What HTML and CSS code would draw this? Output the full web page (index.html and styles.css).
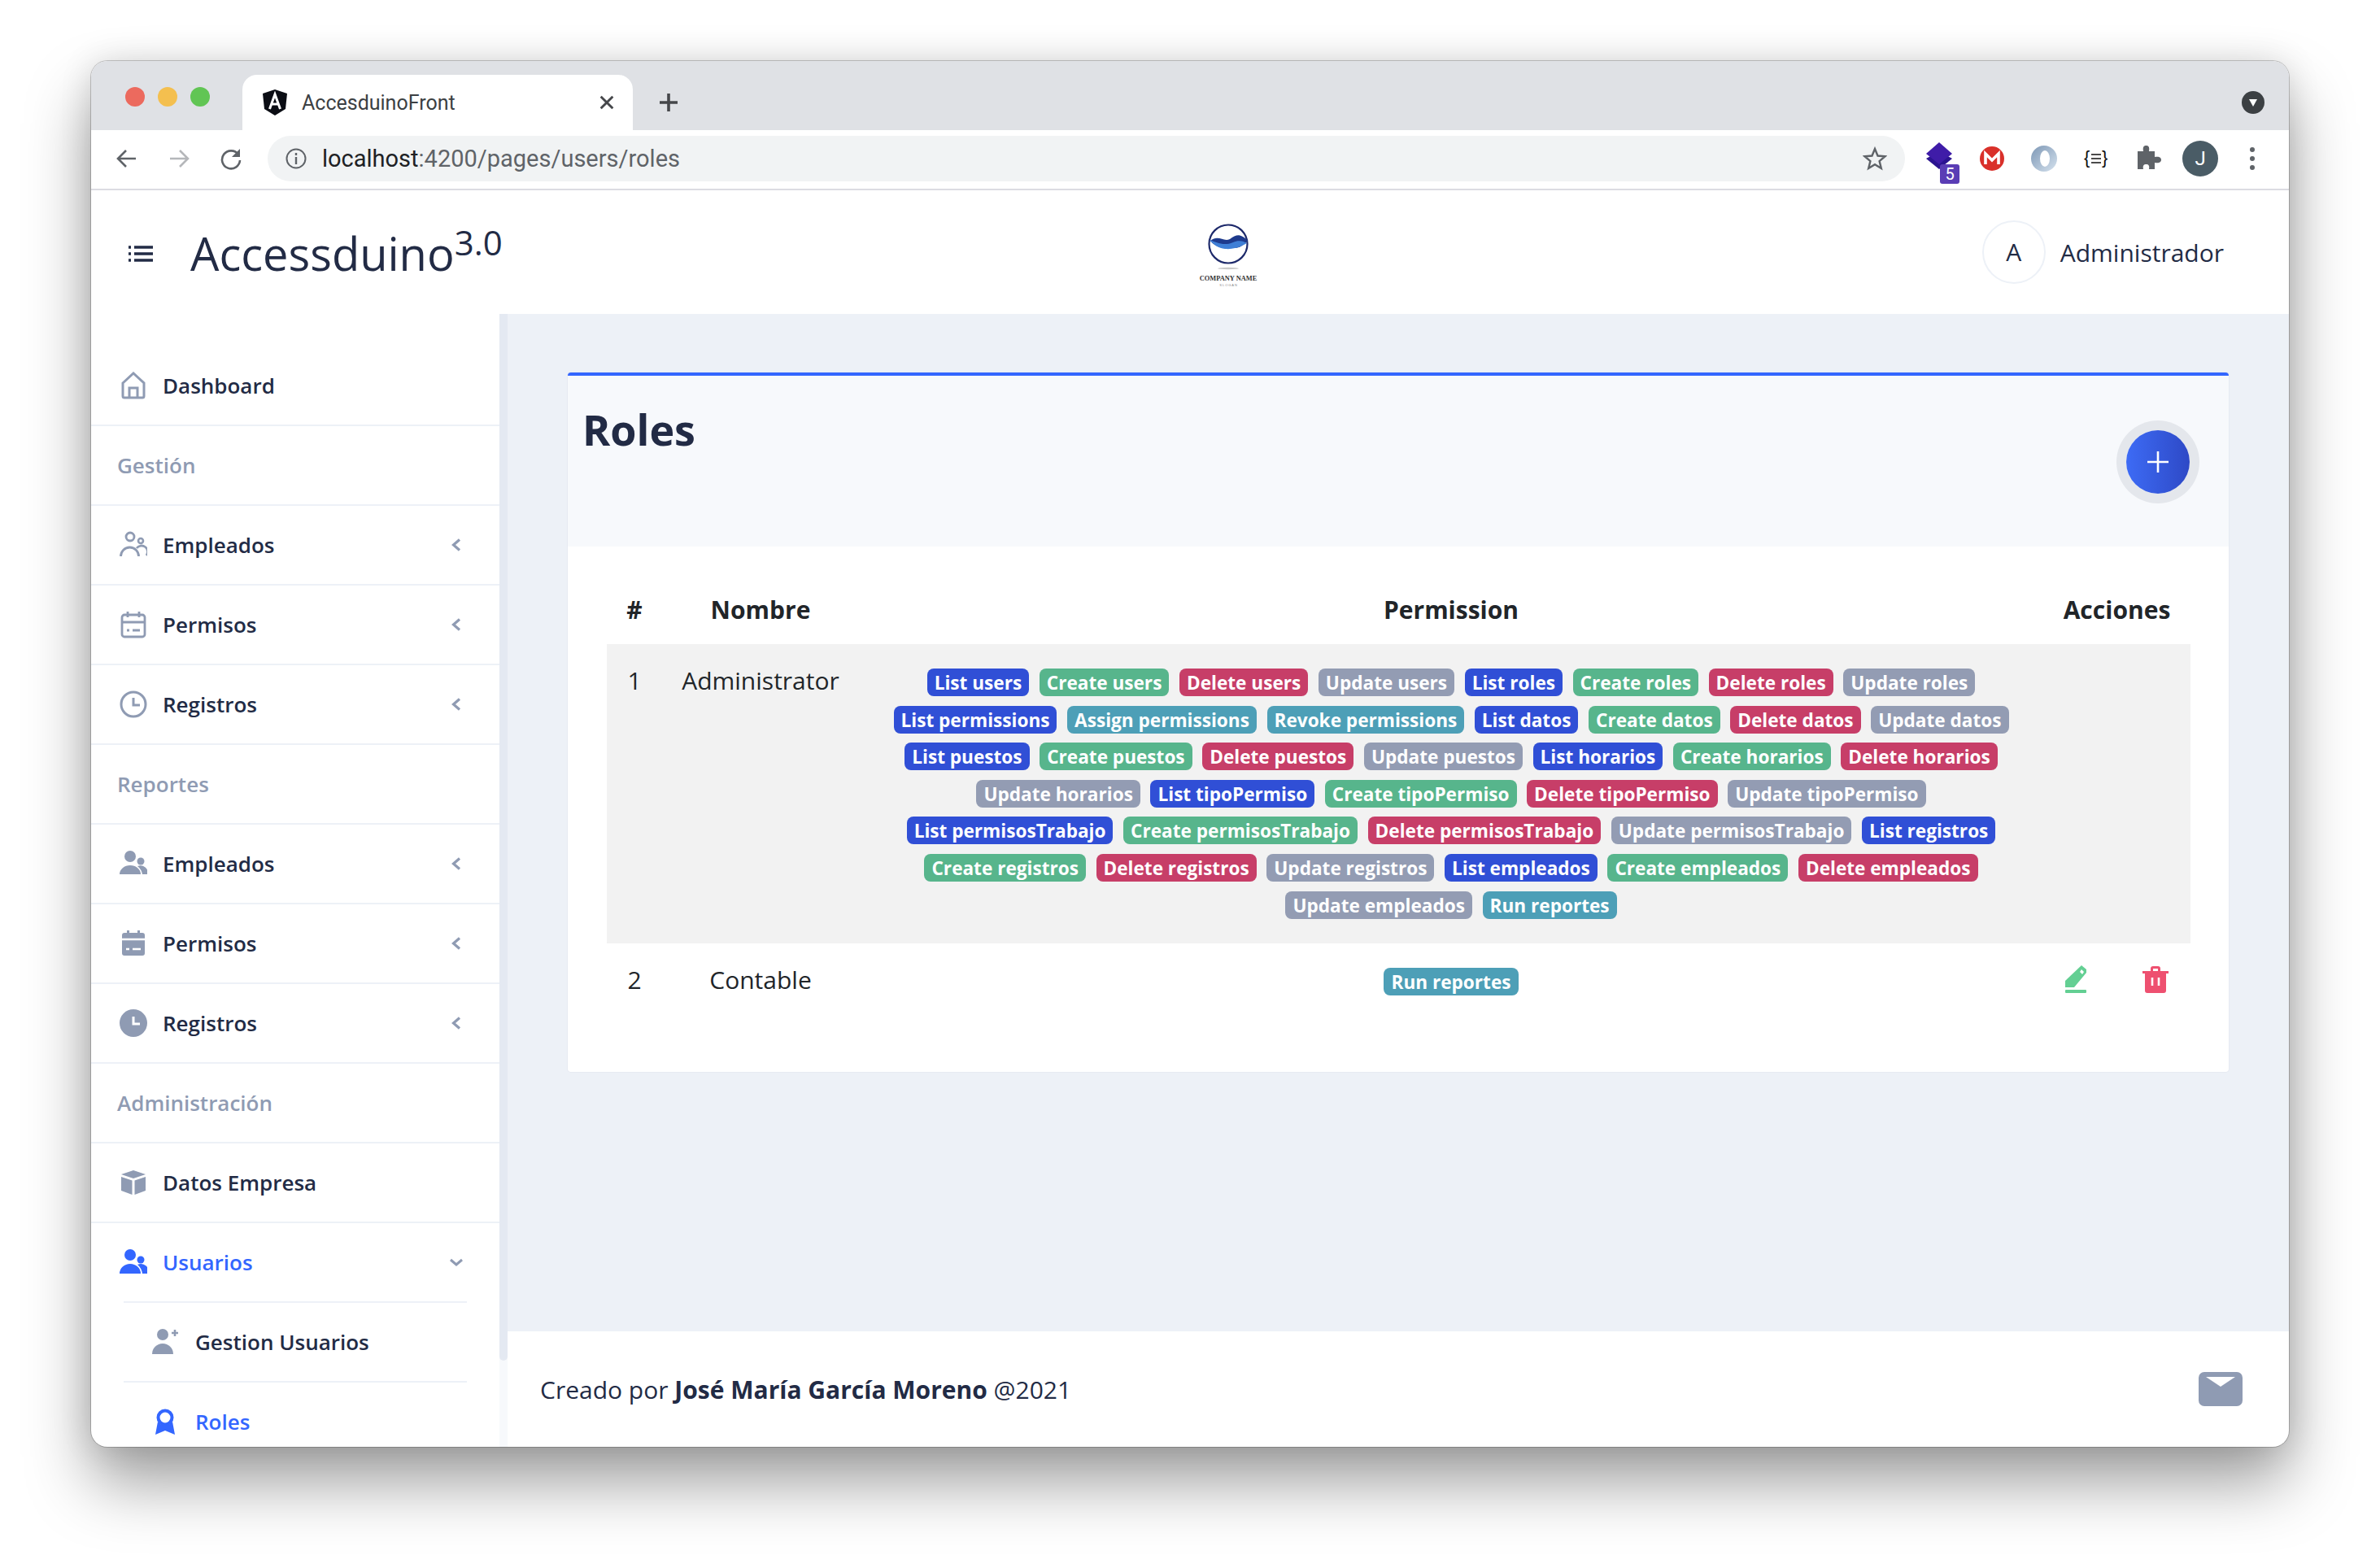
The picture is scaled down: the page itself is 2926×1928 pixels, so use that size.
FILE: index.html
```html
<!DOCTYPE html>
<html lang="es">
<head>
    <meta charset="UTF-8">
    <title>AccesduinoFront</title>
    <link rel="stylesheet" href="styles.css">
</head>
<body>
<div class="window">

    <!-- chrome: tabs -->
    <div class="tabbar">
        <div class="lights">
            <span class="light red"></span>
            <span class="light yellow"></span>
            <span class="light green"></span>
        </div>
        <div class="tab">
            <svg class="favicon" viewBox="0 0 32 32">
                <path d="M16 0 L31 5 L29 24 L16 32 L3 24 L1 5 Z" fill="#0b0d14"/>
                <path d="M9.5 24 L16 6 L22.5 24 M12 18 H20" fill="none" stroke="#fff" stroke-width="3"/>
            </svg>
            <span class="tab-title">AccesduinoFront</span>
            <svg class="tab-close" viewBox="0 0 16 16"><path d="M1.5 1.5 L14.5 14.5 M14.5 1.5 L1.5 14.5" stroke="#45474a" stroke-width="2.6"/></svg>
        </div>
        <svg class="new-tab" viewBox="0 0 24 24"><path d="M12 1 V23 M1 12 H23" stroke="#45474a" stroke-width="3.6"/></svg>
        <div class="profile-drop"><svg viewBox="0 0 16 16"><path d="M3 4 H13 L8 13 Z" fill="#fff"/></svg></div>
    </div>

    <!-- chrome: address bar -->
    <div class="toolbar">
        <svg class="tool-icon" viewBox="0 0 28 28"><path d="M25 14 H4 M13 4 L3 14 L13 24" fill="none" stroke="#5f6368" stroke-width="2.6"/></svg>
        <svg class="tool-icon" viewBox="0 0 28 28"><path d="M3 14 H24 M15 4 L25 14 L15 24" fill="none" stroke="#b5b7ba" stroke-width="2.6"/></svg>
        <svg class="tool-icon" viewBox="0 0 28 28"><path d="M23 9 A11 11 0 1 0 25 16" fill="none" stroke="#5f6368" stroke-width="2.6"/><path d="M25 2 V12 H15 Z" fill="#5f6368"/></svg>
        <div class="omnibox">
            <svg class="info-icon" viewBox="0 0 26 26"><circle cx="13" cy="13" r="11.5" fill="none" stroke="#5f6368" stroke-width="2"/><path d="M13 11 V20 M13 6 V9" stroke="#5f6368" stroke-width="2.4"/></svg>
            <span class="url"><b>localhost</b>:4200/pages/users/roles</span>
            <svg class="star" viewBox="0 0 30 30"><path d="M15 3 L18.5 11.5 L27.5 12.2 L20.6 18.1 L22.8 27 L15 22.2 L7.2 27 L9.4 18.1 L2.5 12.2 L11.5 11.5 Z" fill="none" stroke="#5f6368" stroke-width="2.4"/></svg>
        </div>
        <div class="ext-icons">
            <div class="ext ext-stack">
                <svg viewBox="0 0 40 40"><path d="M3 20 L19 11 L35 20 L19 33 Z" fill="#2b1490"/><path d="M3 14 L19 0 L35 14 L19 27 Z" fill="#3f1ca8"/></svg>
                <span class="ext-count">5</span>
            </div>
            <div class="ext">
                <svg viewBox="0 0 40 40"><circle cx="20" cy="20" r="15" fill="#d9302a"/><path d="M12 27 V14 L20 22 L28 14 V27" fill="none" stroke="#fff" stroke-width="3.6"/></svg>
            </div>
            <div class="ext">
                <svg viewBox="0 0 40 40">
                    <defs>
                        <linearGradient id="ringShade" x1="0" y1="0" x2="1" y2="1">
                            <stop offset="0" stop-color="#7d97b5"/>
                            <stop offset="1" stop-color="#d5e2ee"/>
                        </linearGradient>
                    </defs>
                    <circle cx="20" cy="20" r="16" fill="url(#ringShade)"/>
                    <ellipse cx="21" cy="20" rx="6" ry="10" fill="#fff"/>
                </svg>
            </div>
            <div class="ext">
                <svg viewBox="0 0 40 40"><text class="brace" x="5" y="26">{</text><text class="brace" x="27" y="26">}</text><path d="M14 15 H26 M14 20 H26 M14 25 H26" stroke="#111" stroke-width="1.6"/></svg>
            </div>
            <div class="ext">
                <svg viewBox="0 0 40 40"><path d="M7 11 H14 C13 5 15 4 17.5 4 C20 4 22 5 21 11 H28 V18 C34 17 36 19 36 21.5 C36 24 34 26 28 25 V33 H21 C22 28 20 27 17.5 27 C15 27 13 28 14 33 H7 Z" fill="#5f6368"/></svg>
            </div>
            <div class="ext"><span class="user-chip">J</span></div>
            <div class="ext">
                <svg viewBox="0 0 40 40"><circle cx="20" cy="9" r="3" fill="#5f6368"/><circle cx="20" cy="20" r="3" fill="#5f6368"/><circle cx="20" cy="31" r="3" fill="#5f6368"/></svg>
            </div>
        </div>
    </div>

    <!-- app header -->
    <header class="app-header">
        <div class="header-left">
            <svg class="burger" viewBox="0 0 30 20"><path d="M0 2 H3 M7 2 H30 M0 10 H3 M7 10 H30 M0 18 H3 M7 18 H30" stroke="#222b45" stroke-width="3.4"/></svg>
            <span class="brand">Accessduino<sup>3.0</sup></span>
        </div>
        <svg class="logo" viewBox="0 0 120 100">
            <ellipse cx="60" cy="70" rx="13" ry="1.2" fill="#c9c9c9"/>
            <circle cx="60" cy="40" r="23.5" fill="#fff" stroke="#1e2a6b" stroke-width="2.2"/>
            <path d="M38 36 C48 28 54 38 62 34 C70 28 76 27 84 36 C76 44 72 46 62 44 C52 42 46 46 38 36 Z" fill="#1e3a8c"/>
            <path d="M37 35 C46 38 54 43 66 38 C72 35 78 36 83 39 C76 43 68 47 56 46 C48 45 42 41 37 35 Z" fill="#3f7fd6"/>
            <text class="logo-name" x="60" y="85" text-anchor="middle">COMPANY NAME</text>
            <text class="logo-slogan" x="60" y="92" text-anchor="middle">S L O G A N</text>
        </svg>
        <div class="user-box">
            <span class="avatar">A</span>
            <span class="user-name">Administrador</span>
        </div>
    </header>

    <div class="app-body">
        <aside class="sidebar">
            <a class="nav-row">
                <svg class="nav-icon" viewBox="0 0 34 34"><path d="M4 14 L17 2 L30 14 V30 A2 2 0 0 1 28 32 H6 A2 2 0 0 1 4 30 Z M12 32 V20 H22 V32" fill="none" stroke="#8f9bb3" stroke-width="3"/></svg>
                <span>Dashboard</span>
            </a>
            <div class="nav-title">Gestión</div>
            <a class="nav-row">
                <svg class="nav-icon" viewBox="0 0 34 34"><circle cx="13" cy="7" r="5" fill="none" stroke="#8f9bb3" stroke-width="2.8"/><circle cx="26" cy="12" r="3" fill="none" stroke="#8f9bb3" stroke-width="2.6"/><path d="M1.5 31 A11 11 0 0 1 23.5 31 M21 21 A7.5 7.5 0 0 1 33 30" fill="none" stroke="#8f9bb3" stroke-width="2.8"/></svg>
                <span>Empleados</span>
                <svg class="chevron" viewBox="0 0 12 16"><path d="M10 1.5 L2.5 8 L10 14.5" fill="none" stroke="#8f9bb3" stroke-width="3.2"/></svg>
            </a>
            <a class="nav-row">
                <svg class="nav-icon" viewBox="0 0 34 34"><rect x="3" y="5" width="28" height="27" rx="3" fill="none" stroke="#8f9bb3" stroke-width="2.8"/><path d="M3 14 H31 M10 1 V8 M24 1 V8 M9 24 H12 M16 24 H25" fill="none" stroke="#8f9bb3" stroke-width="2.8"/></svg>
                <span>Permisos</span>
                <svg class="chevron" viewBox="0 0 12 16"><path d="M10 1.5 L2.5 8 L10 14.5" fill="none" stroke="#8f9bb3" stroke-width="3.2"/></svg>
            </a>
            <a class="nav-row">
                <svg class="nav-icon" viewBox="0 0 34 34"><circle cx="17" cy="17" r="15" fill="none" stroke="#8f9bb3" stroke-width="3"/><path d="M17 9 V18 H25" fill="none" stroke="#8f9bb3" stroke-width="3"/></svg>
                <span>Registros</span>
                <svg class="chevron" viewBox="0 0 12 16"><path d="M10 1.5 L2.5 8 L10 14.5" fill="none" stroke="#8f9bb3" stroke-width="3.2"/></svg>
            </a>
            <div class="nav-title">Reportes</div>
            <a class="nav-row">
                <svg class="nav-icon" viewBox="0 0 34 34"><circle cx="13" cy="8" r="7" fill="#8f9bb3"/><circle cx="26" cy="14" r="4.5" fill="#8f9bb3"/><path d="M0 30 A13 11 0 0 1 26 30 Z M22 20 A9 8 0 0 1 34 30 H28 Q27 24 22 20 Z" fill="#8f9bb3"/></svg>
                <span>Empleados</span>
                <svg class="chevron" viewBox="0 0 12 16"><path d="M10 1.5 L2.5 8 L10 14.5" fill="none" stroke="#8f9bb3" stroke-width="3.2"/></svg>
            </a>
            <a class="nav-row">
                <svg class="nav-icon" viewBox="0 0 34 34"><path d="M6 4 H9 V1 H12 V4 H22 V1 H25 V4 H28 A3 3 0 0 1 31 7 V29 A3 3 0 0 1 28 32 H6 A3 3 0 0 1 3 29 V7 A3 3 0 0 1 6 4 Z" fill="#8f9bb3"/><path d="M3 12 H31 M8 24 H12 M16 24 H26" stroke="#fff" stroke-width="2.4"/></svg>
                <span>Permisos</span>
                <svg class="chevron" viewBox="0 0 12 16"><path d="M10 1.5 L2.5 8 L10 14.5" fill="none" stroke="#8f9bb3" stroke-width="3.2"/></svg>
            </a>
            <a class="nav-row">
                <svg class="nav-icon" viewBox="0 0 34 34"><circle cx="17" cy="17" r="17" fill="#8f9bb3"/><path d="M17 9 V18 H25" fill="none" stroke="#fff" stroke-width="3"/></svg>
                <span>Registros</span>
                <svg class="chevron" viewBox="0 0 12 16"><path d="M10 1.5 L2.5 8 L10 14.5" fill="none" stroke="#8f9bb3" stroke-width="3.2"/></svg>
            </a>
            <div class="nav-title">Administración</div>
            <a class="nav-row">
                <svg class="nav-icon" viewBox="0 0 34 34"><path d="M17 2 L32 7 L17 12 L2 7 Z M2 10 L15.5 14.5 V32 L2 27 Z M32 10 L18.5 14.5 V32 L32 27 Z" fill="#8f9bb3"/></svg>
                <span>Datos Empresa</span>
            </a>
            <a class="nav-row open active">
                <svg class="nav-icon" viewBox="0 0 34 34"><circle cx="13" cy="8" r="7" fill="#3366ff"/><circle cx="26" cy="14" r="4.5" fill="#3366ff"/><path d="M0 31 A13 12 0 0 1 26 31 Z M22 20 A9 8 0 0 1 34 31 H28 Q27 24 22 20 Z" fill="#3366ff"/></svg>
                <span>Usuarios</span>
                <svg class="chevron down" viewBox="0 0 18 12"><path d="M2 3 L9 9 L16 3" fill="none" stroke="#8f9bb3" stroke-width="3"/></svg>
            </a>
            <div class="sub-list">
                <a class="nav-row sub-row">
                    <svg class="nav-icon" viewBox="0 0 34 34"><circle cx="14" cy="8" r="7" fill="#8f9bb3"/><path d="M1 32 A13 13 0 0 1 27 32 Z" fill="#8f9bb3"/><path d="M29 2 V10 M25 6 H33" stroke="#8f9bb3" stroke-width="2.6"/></svg>
                    <span>Gestion Usuarios</span>
                </a>
                <a class="nav-row sub-row active">
                    <svg class="nav-icon" viewBox="0 0 34 34"><circle cx="17" cy="12" r="8.5" fill="none" stroke="#3366ff" stroke-width="4"/><path d="M8 17 L5 33 L17 28 L29 33 L26 17 A11 11 0 0 1 8 17 Z" fill="#3366ff"/></svg>
                    <span>Roles</span>
                </a>
            </div>
        </aside>
        <div class="scrollbar"><div class="scrollbar-thumb"></div></div>

        <div class="main-col">
            <main class="content">
                <section class="card">
                    <div class="card-header">
                        <h1>Roles</h1>
                        <button class="fab"><svg viewBox="0 0 28 28"><path d="M14 1 V27 M1 14 H27" stroke="#fff" stroke-width="2.6"/></svg></button>
                    </div>
                    <div class="card-body">
                        <table class="roles-table">
                            <colgroup>
                                <col class="col-num"><col class="col-name"><col class="col-perm"><col class="col-actions">
                            </colgroup>
                            <thead>
                                <tr><th>#</th><th>Nombre</th><th>Permission</th><th>Acciones</th></tr>
                            </thead>
                            <tbody>
                                <tr class="striped">
                                    <td>1</td>
                                    <td>Administrator</td>
                                    <td class="perm-cell">
                                        <div class="badge-row">
                                            <span class="badge list">List users</span><span class="badge create">Create users</span><span class="badge delete">Delete users</span><span class="badge update">Update users</span><span class="badge list">List roles</span><span class="badge create">Create roles</span><span class="badge delete">Delete roles</span><span class="badge update">Update roles</span>
                                        </div>
                                        <div class="badge-row">
                                            <span class="badge list">List permissions</span><span class="badge other">Assign permissions</span><span class="badge other">Revoke permissions</span><span class="badge list">List datos</span><span class="badge create">Create datos</span><span class="badge delete">Delete datos</span><span class="badge update">Update datos</span>
                                        </div>
                                        <div class="badge-row">
                                            <span class="badge list">List puestos</span><span class="badge create">Create puestos</span><span class="badge delete">Delete puestos</span><span class="badge update">Update puestos</span><span class="badge list">List horarios</span><span class="badge create">Create horarios</span><span class="badge delete">Delete horarios</span>
                                        </div>
                                        <div class="badge-row">
                                            <span class="badge update">Update horarios</span><span class="badge list">List tipoPermiso</span><span class="badge create">Create tipoPermiso</span><span class="badge delete">Delete tipoPermiso</span><span class="badge update">Update tipoPermiso</span>
                                        </div>
                                        <div class="badge-row">
                                            <span class="badge list">List permisosTrabajo</span><span class="badge create">Create permisosTrabajo</span><span class="badge delete">Delete permisosTrabajo</span><span class="badge update">Update permisosTrabajo</span><span class="badge list">List registros</span>
                                        </div>
                                        <div class="badge-row">
                                            <span class="badge create">Create registros</span><span class="badge delete">Delete registros</span><span class="badge update">Update registros</span><span class="badge list">List empleados</span><span class="badge create">Create empleados</span><span class="badge delete">Delete empleados</span>
                                        </div>
                                        <div class="badge-row">
                                            <span class="badge update">Update empleados</span><span class="badge other">Run reportes</span>
                                        </div>
                                    </td>
                                    <td></td>
                                </tr>
                                <tr>
                                    <td>2</td>
                                    <td>Contable</td>
                                    <td class="perm-cell">
                                        <div class="badge-row"><span class="badge other">Run reportes</span></div>
                                    </td>
                                    <td>
                                        <div class="row-actions">
                                            <svg viewBox="0 0 28 34"><path d="M21 0 L27 5 L27 9 L12 27 H1 V19 Z" fill="#63cf93"/><path d="M21 5 L24 8 L22 11 L19 8 Z" fill="#fff"/><rect x="1" y="30" width="26" height="4" rx="1" fill="#63cf93"/></svg>
                                            <svg viewBox="0 0 34 34"><path d="M11 7 V4 A3 3 0 0 1 14 1 H20 A3 3 0 0 1 23 4 V7 H33 V10 H30 V31 A3 3 0 0 1 27 34 H7 A3 3 0 0 1 4 31 V10 H1 V7 Z" fill="#ee5070"/><path d="M14 7 V4 H20 V7 Z" fill="#fff"/><path d="M13 15 V25 M21 15 V25" stroke="#fff" stroke-width="2.6"/></svg>
                                        </div>
                                    </td>
                                </tr>
                            </tbody>
                        </table>
                    </div>
                </section>
            </main>
            <footer class="app-footer">
                <span>Creado por <b>José María García Moreno</b> @2021</span>
                <svg class="mail" viewBox="0 0 54 42"><rect width="54" height="42" rx="7" fill="#8f9bb3"/><path d="M9 6 H45 L27 18 Z" fill="#fff"/></svg>
            </footer>
        </div>
    </div>
</div>
</body>
</html>
```

FILE: styles.css
```css
* {
    box-sizing: border-box;
}

body {
    margin: 0;
    height: 1928px;
    padding: 75px 112px 0;
    background-color: #fff;
    font-family: "Open Sans", "Liberation Sans", sans-serif;
    color: #222b45;
    overflow: hidden;
}

.window {
    display: flex;
    flex-direction: column;
    width: 2702px;
    height: 1704px;
    background-color: #fff;
    border-radius: 20px;
    overflow: hidden;
    box-shadow: 0 0 0 1px rgba(0,0,0,0.2), 0 44px 80px rgba(0,0,0,0.38), 0 0 40px rgba(0,0,0,0.12);
}

/* browser chrome */
.tabbar {
    display: flex;
    align-items: flex-end;
    flex: none;
    height: 85px;
    background-color: #dfe1e5;
}

.lights {
    display: flex;
    gap: 16px;
    align-self: flex-start;
    margin: 32px 40px 0 42px;
}

.light {
    width: 24px;
    height: 24px;
    border-radius: 50%;
}

.light.red { background-color: #ec6a5e; }
.light.yellow { background-color: #f4bf4f; }
.light.green { background-color: #61c554; }

.tab {
    display: flex;
    align-items: center;
    width: 480px;
    height: 68px;
    padding: 0 23px 0 24px;
    background-color: #fff;
    border-radius: 18px 18px 0 0;
}

.favicon {
    width: 32px;
    height: 32px;
    margin-right: 17px;
}

.tab-title {
    flex: 1;
    font-family: Roboto, "Liberation Sans", sans-serif;
    font-size: 25px;
    color: #3c4043;
}

.tab-close {
    width: 18px;
    height: 18px;
}

.new-tab {
    width: 24px;
    height: 24px;
    margin: 0 0 22px 32px;
}

.profile-drop {
    display: flex;
    align-items: center;
    justify-content: center;
    width: 28px;
    height: 28px;
    margin: 0 30px 20px auto;
    background-color: #3c4043;
    border-radius: 50%;
}

.profile-drop svg {
    width: 16px;
    height: 16px;
}

.toolbar {
    display: flex;
    align-items: center;
    flex: none;
    height: 74px;
    padding: 0 0 2px 30px;
    border-bottom: 2px solid #dcdce2;
}

.tool-icon {
    width: 28px;
    height: 28px;
    margin-right: 36px;
}

.omnibox {
    display: flex;
    align-items: center;
    width: 2013px;
    height: 56px;
    margin-left: -5px;
    padding: 0 22px;
    background-color: #f1f3f4;
    border-radius: 28px;
}

.info-icon {
    width: 26px;
    height: 26px;
    margin-right: 19px;
}

.url {
    flex: 1;
    font-family: Roboto, "Liberation Sans", sans-serif;
    font-size: 29px;
    color: #5f6368;
}

.url b {
    font-weight: 400;
    color: #202124;
}

.star {
    width: 30px;
    height: 30px;
}

.ext-icons {
    display: flex;
    margin-left: 11px;
}

.ext {
    display: flex;
    align-items: center;
    justify-content: center;
    position: relative;
    width: 64px;
    height: 50px;
}

.ext svg {
    width: 40px;
    height: 40px;
}

.ext-count {
    position: absolute;
    right: 8px;
    bottom: -6px;
    width: 24px;
    height: 24px;
    background-color: #5a3db5;
    border-radius: 3px;
    font-family: Roboto, sans-serif;
    font-size: 20px;
    line-height: 24px;
    text-align: center;
    color: #fff;
}

.brace {
    font-family: "Liberation Sans", sans-serif;
    font-size: 22px;
    fill: #111;
}

.user-chip {
    width: 44px;
    height: 44px;
    background-color: #4a5c66;
    border-radius: 50%;
    font-family: Roboto, sans-serif;
    font-size: 24px;
    line-height: 44px;
    text-align: center;
    color: #fff;
}

/* app header */
.app-header {
    display: flex;
    align-items: center;
    flex: none;
    height: 152px;
    padding: 0 80px 0 46px;
}

.header-left {
    display: flex;
    align-items: center;
    width: 1292px;
}

.burger {
    width: 30px;
    height: 20px;
    margin: 4px 46px 0 0;
}

.brand {
    font-size: 56px;
    font-weight: 400;
    line-height: 1;
    margin-top: 2px;
}

.brand sup {
    font-size: 42px;
    line-height: 0;
    vertical-align: 19px;
}

.logo {
    width: 120px;
    height: 100px;
}

.logo-name {
    font-family: "Liberation Serif", serif;
    font-size: 8.4px;
    font-weight: 700;
    fill: #333;
}

.logo-slogan {
    font-family: "Liberation Sans", sans-serif;
    font-size: 4px;
    fill: #888;
}

.user-box {
    display: flex;
    align-items: center;
    gap: 18px;
    margin-left: auto;
}

.avatar {
    width: 78px;
    height: 78px;
    border: 2px solid #edf1f7;
    border-radius: 50%;
    font-size: 30px;
    line-height: 74px;
    text-align: center;
}

.user-name {
    font-size: 30px;
}

/* layout under the header */
.app-body {
    display: flex;
    flex: 1;
    min-height: 0;
}

.sidebar {
    flex: none;
    width: 502px;
    padding-top: 40px;
    overflow: hidden;
}

.nav-row {
    display: flex;
    align-items: center;
    gap: 19px;
    height: 98px;
    padding: 0 47px 0 35px;
    border-bottom: 2px solid #edf1f7;
    font-size: 26px;
    font-weight: 600;
    color: #222b45;
}

.nav-icon {
    flex: none;
    width: 34px;
    height: 34px;
}

.nav-title {
    height: 98px;
    padding-left: 32px;
    border-bottom: 2px solid #edf1f7;
    font-size: 26px;
    font-weight: 600;
    line-height: 96px;
    color: #8f9bb3;
}

.chevron {
    width: 12px;
    height: 16px;
    margin-left: auto;
}

.chevron.down {
    width: 18px;
    height: 12px;
    margin-right: -3px;
}

.nav-row.open {
    height: 96px;
    border-bottom: 0;
}

.nav-row.active {
    color: #3366ff;
}

.sub-list {
    padding: 0 40px;
}

.sub-row {
    gap: 20px;
    padding: 0 0 0 34px;
    border-top: 2px solid #edf1f7;
    border-bottom: 0;
}

.scrollbar {
    flex: none;
    width: 10px;
    background-color: #f7f9fc;
}

.scrollbar-thumb {
    height: 1287px;
    background-color: #e4e9f2;
    border-radius: 0 0 5px 5px;
}

.main-col {
    display: flex;
    flex-direction: column;
    flex: 1;
    min-width: 0;
}

.content {
    flex: 1;
    padding: 72px 74px 0;
    background-color: #edf1f7;
}

.card {
    height: 860px;
    background-color: #fff;
    border-top: 4px solid #3366ff;
    border-radius: 4px;
    box-shadow: 0 0 0 1px #e6eaf2;
}

.card-header {
    display: flex;
    justify-content: space-between;
    height: 210px;
    padding: 31px 48px 0 18px;
    background-color: #f7f9fc;
}

.card-header h1 {
    margin: 0;
    font-size: 52px;
    font-weight: 700;
    line-height: 70px;
}

.fab {
    width: 78px;
    height: 78px;
    margin-top: 36px;
    padding: 0;
    border: none;
    border-radius: 50%;
    background: linear-gradient(90deg, #3d6bf5, #2e49c6);
    box-shadow: 0 0 0 12px #e4e7ec;
}

.fab svg {
    display: block;
    width: 28px;
    height: 28px;
    margin: auto;
}

.card-body {
    padding: 40px 47px 0 48px;
}

.roles-table {
    width: 100%;
    table-layout: fixed;
    border-collapse: collapse;
    color: #212529;
}

.col-num { width: 68px; }
.col-name { width: 242px; }
.col-actions { width: 181px; }

.roles-table th {
    height: 80px;
    padding: 0 0 6px;
    font-size: 30px;
    font-weight: 700;
    text-align: center;
}

.roles-table td {
    padding: 28px 0;
    font-size: 30px;
    line-height: 34px;
    text-align: center;
    vertical-align: top;
}

.roles-table td.perm-cell {
    padding: 30px 0;
}

.striped {
    background-color: #f2f2f2;
}

.badge-row {
    display: flex;
    justify-content: center;
    gap: 12.6px;
    margin-bottom: 11.6px;
}

.badge-row:last-child {
    margin-bottom: 0;
}

.badge {
    height: 34px;
    padding: 0 9px;
    border-radius: 8px;
    font-size: 22.6px;
    font-weight: 700;
    line-height: 35px;
    color: #fff;
}

.badge.list { background-color: #304fd6; }
.badge.create { background-color: #57b58c; }
.badge.delete { background-color: #c73e68; }
.badge.update { background-color: #939cb3; }
.badge.other { background-color: #4d9fb7; }

.row-actions {
    display: flex;
    justify-content: center;
    gap: 67px;
    margin-top: -1px;
}

.row-actions svg {
    height: 34px;
}

.row-actions svg:first-child {
    width: 28px;
}

.row-actions svg:last-child {
    width: 34px;
}

.app-footer {
    display: flex;
    align-items: center;
    justify-content: space-between;
    flex: none;
    height: 142px;
    padding: 0 57px 0 40px;
    font-size: 30px;
}

.mail {
    width: 54px;
    height: 42px;
}
```
